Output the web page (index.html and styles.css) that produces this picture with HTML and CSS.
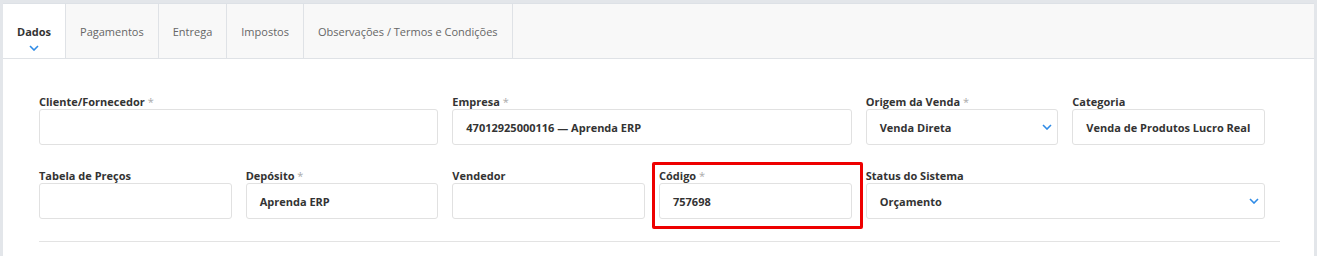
FILE: index.html
```html
<!DOCTYPE html>
<html lang="pt-BR">
<head>
    <meta charset="UTF-8">
    <meta name="viewport" content="width=device-width, initial-scale=1.0">
    <title>Pedido de Venda</title>
    <link rel="stylesheet" href="styles.css">
</head>
<body>
    <div class="panel">
        <div class="tab-bar">
            <div class="tab tab-active">
                <span>Dados</span>
                <svg class="tab-chevron" width="10" height="6" viewBox="0 0 10 6"><path d="M1 1l4 4 4-4" fill="none" stroke="#2f8be6" stroke-width="1.6"/></svg>
            </div>
            <div class="tab">Pagamentos</div>
            <div class="tab">Entrega</div>
            <div class="tab">Impostos</div>
            <div class="tab">Observações / Termos e Condições</div>
        </div>

        <div class="form-body">
            <div class="form-grid">
                <div class="field span-2">
                    <label class="field-label">Cliente/Fornecedor <span class="req">*</span></label>
                    <div class="field-input"></div>
                </div>
                <div class="field span-2">
                    <label class="field-label">Empresa <span class="req">*</span></label>
                    <div class="field-input">47012925000116 — Aprenda ERP</div>
                </div>
                <div class="field">
                    <label class="field-label">Origem da Venda <span class="req">*</span></label>
                    <div class="field-input field-select">
                        <span>Venda Direta</span>
                        <svg width="10" height="6" viewBox="0 0 10 6"><path d="M1 1l4 4 4-4" fill="none" stroke="#2f8be6" stroke-width="1.6"/></svg>
                    </div>
                </div>
                <div class="field">
                    <label class="field-label">Categoria</label>
                    <div class="field-input">Venda de Produtos Lucro Real</div>
                </div>

                <div class="field">
                    <label class="field-label">Tabela de Preços</label>
                    <div class="field-input"></div>
                </div>
                <div class="field">
                    <label class="field-label">Depósito <span class="req">*</span></label>
                    <div class="field-input">Aprenda ERP</div>
                </div>
                <div class="field">
                    <label class="field-label">Vendedor</label>
                    <div class="field-input"></div>
                </div>
                <div class="field highlight">
                    <label class="field-label">Código <span class="req">*</span></label>
                    <div class="field-input">757698</div>
                </div>
                <div class="field span-2">
                    <label class="field-label">Status do Sistema</label>
                    <div class="field-input field-select">
                        <span>Orçamento</span>
                        <svg width="10" height="6" viewBox="0 0 10 6"><path d="M1 1l4 4 4-4" fill="none" stroke="#2f8be6" stroke-width="1.6"/></svg>
                    </div>
                </div>
            </div>
            <hr class="divider">
        </div>
    </div>
</body>
</html>
```
FILE: styles.css
```css
/* Pedido de venda - aba Dados */
body {
    margin: 0;
    padding: 3px 3px 0 3px;
    background-color: #e3e6ea;
    font-family: "Open Sans", "Noto Sans", sans-serif;
    color: #333;
    height: 256px;
    box-sizing: border-box;
    overflow: hidden;
}
.panel {
    background-color: #fff;
    width: 1311px;
    height: 100%;
    border-top: 1px solid #dde1e6;
    box-sizing: border-box;
}

/* --- Tabs --- */
.tab-bar {
    display: flex;
    height: 54px;
    background-color: #f8f8f8;
    border-bottom: 1px solid #dfe2e6;
}
.tab {
    display: flex;
    flex-direction: column;
    align-items: center;
    justify-content: center;
    padding: 0 14px;
    border-right: 1px solid #dfe2e6;
    font-size: 11px;
    color: #666;
}
.tab-active {
    background-color: #fff;
    color: #333;
    font-weight: 700;
    padding: 12px 14px 0 14px;
}
.tab-chevron {
    margin-top: 6px;
}

/* --- Form --- */
.form-body {
    padding: 36px 0 0 36px;
}
.form-grid {
    display: grid;
    grid-template-columns: repeat(6, 1fr);
    column-gap: 14px;
    row-gap: 24px;
    width: 1226px;
}
.span-2 {
    grid-column: span 2;
}
.field {
    display: flex;
    flex-direction: column;
}
.field-label {
    font-size: 11px;
    font-weight: 700;
    line-height: 14px;
    color: #333;
}
.req {
    color: #aaa;
    font-weight: 400;
}
.field-input {
    display: flex;
    align-items: center;
    height: 36px;
    box-sizing: border-box;
    border: 1px solid #e1e1e1;
    border-radius: 3px;
    padding: 0 13px;
    font-size: 11px;
    font-weight: 700;
    color: #333;
    white-space: nowrap;
    overflow: hidden;
}
.field-select {
    justify-content: space-between;
    padding-right: 5px;
}
.highlight {
    position: relative;
}
.highlight::after {
    content: "";
    position: absolute;
    top: -7px;
    left: -7px;
    right: -11px;
    bottom: -10px;
    border: 3px solid #ee0000;
    border-radius: 2px;
}
.divider {
    width: 1241px;
    margin: 22px 0 0 0;
    border: 0;
    border-top: 1px solid #e3e3e3;
}
```
